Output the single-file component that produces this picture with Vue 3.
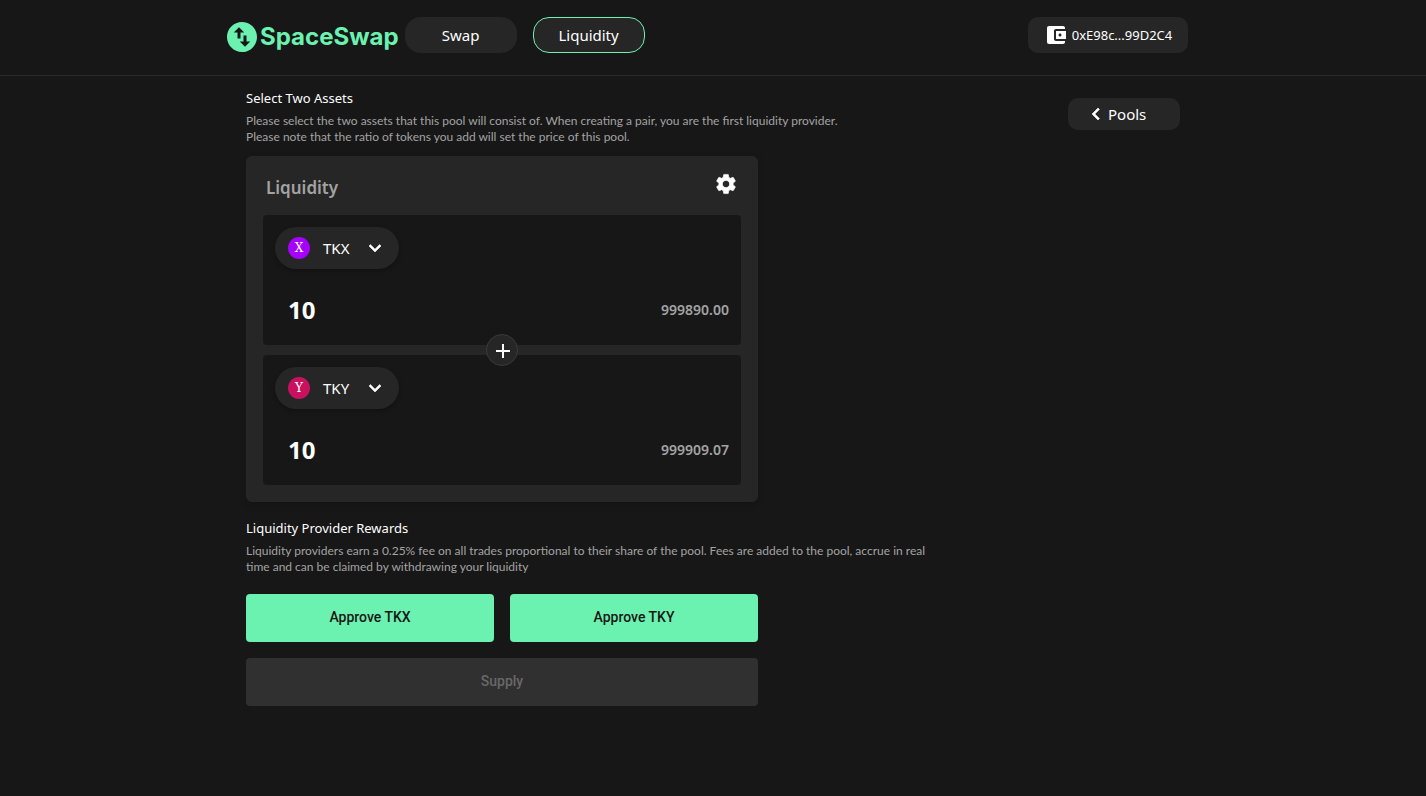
<script setup>
import { ref } from 'vue'

const tokens = ref([
  { symbol: 'TKX', letter: 'X', tone: 'violet', amount: '10', balance: '999890.00' },
  { symbol: 'TKY', letter: 'Y', tone: 'pink', amount: '10', balance: '999909.07' },
])
</script>

<template>
  <div class="page">
    <header class="topbar">
      <div class="container topbar-row">
        <a class="brand" href="#">
          <svg class="brand-mark" viewBox="0 0 24 24" aria-hidden="true">
            <path d="M12 2C6.48 2 2 6.48 2 12s4.48 10 10 10 10-4.48 10-10S17.52 2 12 2zM6.5 9L10 5.5 13.5 9H11v4H9V9H6.5zm11 6L14 18.5 10.5 15H13v-4h2v4h2.5z" />
          </svg>
          <span class="brand-name">SpaceSwap</span>
        </a>
        <nav class="nav">
          <a class="nav-link" href="#swap">Swap</a>
          <a class="nav-link active" href="#liquidity">Liquidity</a>
        </nav>
        <button class="wallet" type="button">
          <svg class="icon" viewBox="0 0 24 24" aria-hidden="true">
            <path d="M21 18v1c0 1.1-.9 2-2 2H5c-1.11 0-2-.9-2-2V5c0-1.1.89-2 2-2h14c1.1 0 2 .9 2 2v1h-9c-1.11 0-2 .9-2 2v8c0 1.1.89 2 2 2h9zm-9-2h10V8H12v8zm4-2.5c-.83 0-1.5-.67-1.5-1.5s.67-1.5 1.5-1.5 1.5.67 1.5 1.5-.67 1.5-1.5 1.5z" />
          </svg>
          <span>0xE98c...99D2C4</span>
        </button>
      </div>
    </header>

    <main class="container content">
      <div class="column">
        <section class="note">
          <h2>Select Two Assets</h2>
          <p>
            Please select the two assets that this pool will consist of. When creating a pair, you are the first liquidity provider.<br />
            Please note that the ratio of tokens you add will set the price of this pool.
          </p>
        </section>

        <section class="card">
          <div class="card-head">
            <h1>Liquidity</h1>
            <button class="gear" type="button" aria-label="Settings">
              <svg class="icon" viewBox="0 0 24 24" aria-hidden="true">
                <path class="outlined" d="M19.14 12.94c.04-.3.06-.61.06-.94 0-.32-.02-.64-.07-.94l2.03-1.58c.18-.14.23-.41.12-.61l-1.92-3.32c-.12-.22-.37-.29-.59-.22l-2.39.96c-.5-.38-1.03-.7-1.62-.94l-.36-2.54c-.04-.24-.24-.41-.48-.41h-3.84c-.24 0-.43.17-.47.41l-.36 2.54c-.59.24-1.13.57-1.62.94l-2.39-.96c-.22-.08-.47 0-.59.22L2.74 8.87c-.12.21-.08.47.12.61l2.03 1.58c-.05.3-.09.63-.09.94s.02.64.07.94l-2.03 1.58c-.18.14-.23.41-.12.61l1.92 3.32c.12.22.37.29.59.22l2.39-.96c.5.38 1.03.7 1.62.94l.36 2.54c.05.24.24.41.48.41h3.84c.24 0 .44-.17.47-.41l.36-2.54c.59-.24 1.13-.56 1.62-.94l2.39.96c.22.08.47 0 .59-.22l1.92-3.32c.12-.22.07-.47-.12-.61l-2.01-1.58zM12 15.6c-1.98 0-3.6-1.62-3.6-3.6s1.62-3.6 3.6-3.6 3.6 1.62 3.6 3.6-1.62 3.6-3.6 3.6z" />
              </svg>
            </button>
          </div>
          <div class="pair">
            <div v-for="token in tokens" :key="token.symbol" class="asset">
              <button class="chip" type="button">
                <span class="coin" :class="token.tone">{{ token.letter }}</span>
                <span class="symbol">{{ token.symbol }}</span>
                <svg class="icon" viewBox="0 0 24 24" aria-hidden="true">
                  <path class="outlined" d="M7.41 8.59 12 13.17l4.59-4.58L18 10l-6 6-6-6 1.41-1.41z" />
                </svg>
              </button>
              <div class="amount-row">
                <input v-model="token.amount" class="amount" type="text" :aria-label="token.symbol + ' amount'" />
                <span class="balance">{{ token.balance }}</span>
              </div>
            </div>
            <span class="plus">
              <svg class="icon" viewBox="0 0 24 24" aria-hidden="true">
                <path d="M12 6h2v6h6v2h-6v6h-2v-6H6v-2h6z" />
              </svg>
            </span>
          </div>
        </section>

        <section class="note rewards">
          <h2>Liquidity Provider Rewards</h2>
          <p>
            Liquidity providers earn a 0.25% fee on all trades proportional to their share of the pool. Fees are added to the pool, accrue in real time and can be claimed by withdrawing your liquidity
          </p>
        </section>

        <div class="actions">
          <button v-for="token in tokens" :key="token.symbol" class="action" type="button">Approve {{ token.symbol }}</button>
          <button class="action supply" type="button" disabled>Supply</button>
        </div>
      </div>

      <a class="pools" href="#pools">
        <svg class="icon" viewBox="0 0 24 24" aria-hidden="true">
          <path class="outlined" d="M15.41 7.41 14 6l-6 6 6 6 1.41-1.41L10.83 12z" />
        </svg>
        <span>Pools</span>
      </a>
    </main>
  </div>
</template>

<style>
body {
  margin: 0;
  background: #171717;
}
</style>

<style scoped>
.page {
  min-height: 100vh;
  background: #171717;
  color: #fff;
  font-family: 'Segoe UI', 'Noto Sans', sans-serif;
  font-size: 15px;
}
.page * {
  box-sizing: border-box;
}
.container {
  max-width: 978px;
  margin: 0 auto;
}
button,
input {
  font: inherit;
  color: inherit;
  border: 0;
  padding: 0;
}
button {
  cursor: pointer;
}
a {
  color: inherit;
  text-decoration: none;
}
h1,
h2,
p {
  margin: 0;
}
.icon {
  width: 24px;
  height: 24px;
  fill: currentColor;
  flex: none;
}
.outlined {
  stroke: currentColor;
  stroke-width: 0.6;
}

.topbar {
  border-bottom: 1px solid #2a2a2a;
}
.topbar-row {
  display: flex;
  align-items: flex-start;
  height: 75px;
  padding: 17px 14px 0 0;
}
.brand {
  display: flex;
  align-items: center;
  height: 40px;
  color: #6cf2b0;
}
.brand-mark {
  width: 36px;
  height: 36px;
  fill: currentColor;
}
.brand-name {
  font: 700 24px/30px Inter, sans-serif;
}
.nav {
  display: flex;
  gap: 16px;
  margin-left: 6px;
}
.nav-link {
  display: flex;
  align-items: center;
  justify-content: center;
  width: 112px;
  height: 36px;
  border: 1px solid transparent;
  border-radius: 16px;
  background: #262626;
}
.nav-link.active {
  border-color: #6cf2b0;
}
.wallet {
  display: flex;
  align-items: center;
  justify-content: center;
  gap: 4px;
  width: 160px;
  height: 36px;
  margin-left: auto;
  border-radius: 10px;
  background: #262626;
  font-size: 13px;
}

.content {
  display: flex;
  justify-content: space-between;
  align-items: flex-start;
  padding: 12px 22px 0;
}
.column {
  width: 700px;
}
.note h2 {
  font-size: 13px;
  font-weight: 400;
  line-height: 20px;
}
.note p {
  margin-top: 5px;
  color: #a3a3a3;
  font-family: 'Segoe UI', Lato, sans-serif;
  font-size: 12px;
  line-height: 16px;
}
.card {
  max-width: 512px;
  margin-top: 11px;
  padding: 16px;
  border: 1px solid #272727;
  border-radius: 6px;
  background: #262626;
  box-shadow: 0 2px 6px rgba(0, 0, 0, 0.2);
}
.card-head {
  display: flex;
  justify-content: space-between;
  height: 42px;
  padding: 0 3px;
}
.card-head h1 {
  color: #a3a3a3;
  font-size: 17px;
  font-weight: 600;
  line-height: 30px;
}
.gear {
  width: 24px;
  height: 24px;
  background: none;
  margin-top: -1px;
}
.pair {
  position: relative;
  display: grid;
  gap: 10px;
}
.asset {
  height: 130px;
  padding: 12px;
  border-radius: 4px;
  background: #171717;
}
.chip {
  display: flex;
  align-items: center;
  height: 42px;
  padding: 0 12px 0 13px;
  border-radius: 21px;
  background: #262626;
  box-shadow: 0 2px 4px rgba(0, 0, 0, 0.25);
}
.coin {
  width: 22px;
  border-radius: 50%;
  font: 12px/22px 'DejaVu Serif', serif;
  text-align: center;
}
.coin.violet {
  background: #a600ff;
}
.coin.pink {
  background: #c8125f;
}
.symbol {
  margin: 0 14px 0 13px;
}
.amount-row {
  display: flex;
  align-items: center;
  justify-content: space-between;
  height: 40px;
  margin-top: 20px;
}
.amount {
  flex: 1;
  min-width: 0;
  height: 40px;
  padding: 0 13px;
  background: none;
  font-size: 24px;
  font-weight: 700;
}
.balance {
  color: #a3a3a3;
  font-size: 14px;
  font-weight: 600;
}
.plus {
  position: absolute;
  top: calc(50% - 16px);
  left: calc(50% - 16px);
  display: grid;
  place-items: center;
  width: 32px;
  height: 32px;
  border: 1px solid #3a3a3a;
  border-radius: 50%;
  background: #262626;
}

.rewards {
  margin-top: 16px;
}
.actions {
  display: grid;
  grid-template-columns: 1fr 1fr;
  gap: 16px;
  max-width: 512px;
  margin-top: 19px;
}
.action {
  height: 48px;
  padding-bottom: 2px;
  border-radius: 4px;
  background: #6cf2b0;
  color: #171717;
  font: 500 14px/20px Roboto, sans-serif;
}
.supply {
  grid-column: 1 / -1;
  background: #303030;
  color: #686868;
  cursor: default;
}
.pools {
  display: flex;
  align-items: center;
  width: 112px;
  height: 32px;
  margin-top: 10px;
  padding-left: 16px;
  border-radius: 10px;
  background: #262626;
}
</style>
